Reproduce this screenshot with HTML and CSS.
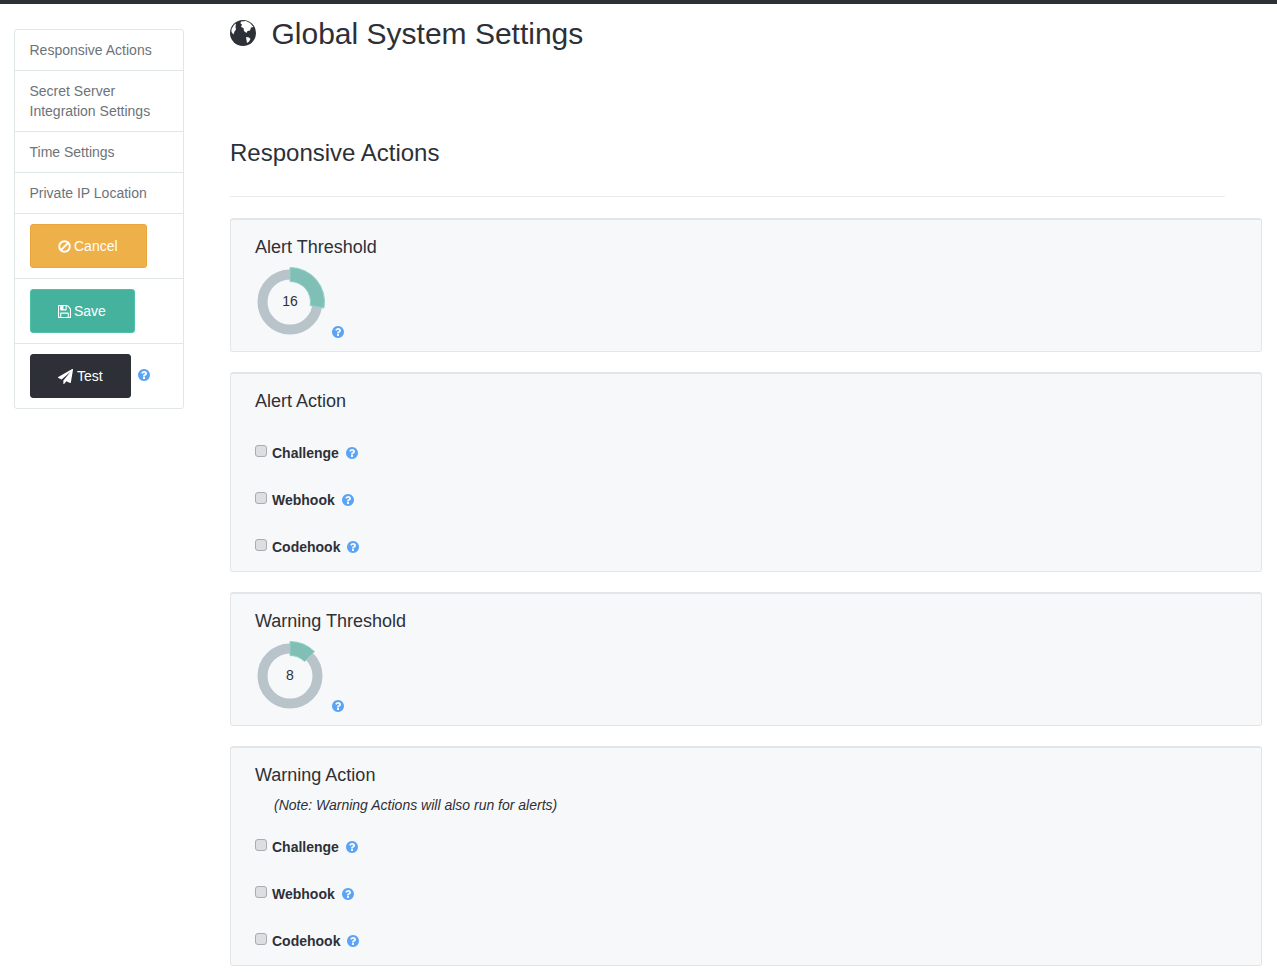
FILE: index.html
```html
<!DOCTYPE html>
<html>
    <head>
        <meta charset="UTF-8" />
        <title>Global System Settings</title>
        <link rel="stylesheet" href="styles.css">
    </head>
    <body>
        <svg class="sprites" width="0" height="0">
            <symbol id="help" viewBox="128 128 1536 1536">
                <path d="M1024 1376v-192q0-14-9-23t-23-9h-192q-14 0-23 9t-9 23v192q0 14 9 23t23 9h192q14 0 23-9t9-23zm256-672q0-88-55.5-163t-138.5-116-170-41q-243 0-371 213-15 24 8 42l132 100q7 6 19 6 16 0 25-12 53-68 86-92 34-24 86-24 48 0 85.5 26t37.5 59q0 38-20 61t-68 45q-63 28-115.5 86.5t-52.5 125.5v36q0 14 9 23t23 9h192q14 0 23-9t9-23q0-19 21.5-49.5t54.5-49.5q32-18 49-28.5t46-35 44.5-48 28-60.5 12.5-81zm384 192q0 209-103 385.5t-279.5 279.5-385.5 103-385.5-103-279.5-279.5-103-385.5 103-385.5 279.5-279.5 385.5-103 385.5 103 279.5 279.5 103 385.5z"/>
            </symbol>
        </svg>
        <div class="topbar"></div>
        <div class="layout">
            <div class="sidebar">
                <a class="side-item">Responsive Actions</a>
                <a class="side-item">Secret Server Integration Settings</a>
                <a class="side-item">Time Settings</a>
                <a class="side-item">Private IP Location</a>
                <div class="side-btn">
                    <button class="btn btn-cancel">
                        <svg class="btn-icon" viewBox="0 0 14 14"><circle cx="7" cy="7" r="5.700" fill="none" stroke="currentColor" stroke-width="2"/><path d="M3 11l8-8" stroke="currentColor" stroke-width="2"/></svg>
                        Cancel
                    </button>
                </div>
                <div class="side-btn">
                    <button class="btn btn-save">
                        <svg class="btn-icon" viewBox="128 128 1536 1536" fill="currentColor"><path d="M512 1536h768v-384h-768v384zm896 0h128v-896q0-14-10-38.5t-20-34.5l-281-281q-10-10-34-20t-39-10v416q0 40-28 68t-68 28h-576q-40 0-68-28t-28-68v-416h-128v1280h128v-416q0-40 28-68t68-28h832q40 0 68 28t28 68v416zm-384-928v-320q0-13-9.5-22.5t-22.5-9.5h-192q-13 0-22.5 9.5t-9.5 22.5v320q0 13 9.5 22.5t22.5 9.5h192q13 0 22.5-9.5t9.5-22.5zm640 32v928q0 40-28 68t-68 28h-1344q-40 0-68-28t-28-68v-1344q0-40 28-68t68-28h928q40 0 88 20t76 48l280 280q28 28 48 76t20 88z"/></svg>
                        Save
                    </button>
                </div>
                <div class="side-btn">
                    <button class="btn btn-test">
                        <svg class="btn-icon" viewBox="0 0 1792 1792" fill="currentColor"><path d="M1764 11q33 24 27 64l-256 1536q-5 29-32 45-14 8-31 8-11 0-24-5l-453-185-242 295q-18 23-49 23-13 0-22-4-19-7-30.5-23.5t-11.5-36.5v-349l864-1059-1069 925-395-162q-37-14-40-55-2-40 32-59l1664-960q15-9 32-9 20 0 36 11z"/></svg>
                        Test
                    </button>
                    <svg class="help help-test"><use href="#help"/></svg>
                </div>
            </div>

            <div class="main">
                <h1 class="page-title">
                    <svg class="globe" viewBox="0 0 26 26">
                        <circle cx="13" cy="13" r="13" fill="#2e3038"/>
                        <path d="M11 1.500l5-.5 4 2 3.500 4-2.500 .5-1 3-2.500 .5-1 2-2.500-2-.5-3-2.500-1 1-2.500-1.500-1z" fill="#fff"/>
                        <path d="M1.500 9l2.500-4 2-1.500-.5 3.500 .5 2.500-1.500 2-1 3-2-2.500z" fill="#fff"/>
                        <path d="M16 17l3 .5 1.500 1.500-1.500 2.500-2 1.500-.5-3z" fill="#fff"/>
                    </svg>
                    Global System Settings
                </h1>
                <h2 class="section-title">Responsive Actions</h2>
                <hr class="rule">

                <div class="panel">
                    <h3 class="panel-title">Alert Threshold</h3>
                    <div class="gauge-row">
                        <svg class="gauge" viewBox="0 0 70 70">
                            <circle cx="35" cy="35" r="27.500" fill="none" stroke="#b8c4ca" stroke-width="10"/>
                            <path d="M35 .5A34.500 34.500 0 0 1 68.980 41L55.190 38.570A20.500 20.500 0 0 0 35 14.500Z" fill="#7fbfb6" stroke="#93d3c6"/>
                            <text x="35" y="39" text-anchor="middle" class="gauge-num">16</text>
                        </svg>
                        <svg class="help"><use href="#help"/></svg>
                    </div>
                </div>

                <div class="panel panel-checks">
                    <h3 class="panel-title">Alert Action</h3>
                    <div class="checks">
                        <label class="check"><input type="checkbox"><b>Challenge</b><svg class="help"><use href="#help"/></svg></label>
                        <label class="check"><input type="checkbox"><b>Webhook</b><svg class="help"><use href="#help"/></svg></label>
                        <label class="check"><input type="checkbox"><b>Codehook</b><svg class="help"><use href="#help"/></svg></label>
                    </div>
                </div>

                <div class="panel">
                    <h3 class="panel-title">Warning Threshold</h3>
                    <div class="gauge-row">
                        <svg class="gauge" viewBox="0 0 70 70">
                            <circle cx="35" cy="35" r="27.500" fill="none" stroke="#b8c4ca" stroke-width="10"/>
                            <path d="M35 .5A34.500 34.500 0 0 1 59.400 10.600L49.500 20.500A20.500 20.500 0 0 0 35 14.500Z" fill="#7fbfb6" stroke="#93d3c6"/>
                            <text x="35" y="39" text-anchor="middle" class="gauge-num">8</text>
                        </svg>
                        <svg class="help"><use href="#help"/></svg>
                    </div>
                </div>

                <div class="panel panel-checks">
                    <h3 class="panel-title">Warning Action</h3>
                    <p class="note">(Note: Warning Actions will also run for alerts)</p>
                    <div class="checks">
                        <label class="check"><input type="checkbox"><b>Challenge</b><svg class="help"><use href="#help"/></svg></label>
                        <label class="check"><input type="checkbox"><b>Webhook</b><svg class="help"><use href="#help"/></svg></label>
                        <label class="check"><input type="checkbox"><b>Codehook</b><svg class="help"><use href="#help"/></svg></label>
                    </div>
                </div>
            </div>
        </div>
    </body>
</html>
```

FILE: styles.css
```css
body{
    margin: 0;
    font-family: "Liberation Sans", Arial, sans-serif;
    font-size: 14px;
    line-height: 20px;
    color: #2e3038;
    background-color: white;
}
.sprites{
    display: block;
    height: 0;
}
.topbar{
    height: 4px;
    background-color: #2e3038;
}
.layout{
    display: flex;
    align-items: flex-start;
}

/* left menu */
.sidebar{
    width: 168px;
    margin-top: 25px;
    margin-left: 14px;
    border: 1px solid #e1e6e8;
    border-radius: 3px;
    flex-shrink: 0;
}
.side-item{
    display: block;
    padding: 10px 15px 10px 14.5px;
    color: #6c737b;
    border-bottom: 1px solid #e1e6e8;
}
.side-btn{
    display: flex;
    align-items: center;
    padding: 10px 15px;
    border-bottom: 1px solid #e1e6e8;
}
.side-btn:last-child{
    border-bottom: none;
}
.btn{
    display: flex;
    align-items: center;
    height: 44px;
    padding: 0 28px 0 27px;
    font-family: inherit;
    font-size: 14px;
    color: white;
    border: 1px solid transparent;
    border-radius: 3px;
}
.btn-icon{
    width: 13px;
    height: 13px;
    margin-right: 3px;
}
.btn-cancel{
    background-color: #eeb049;
    border-color: #eaa63a;
}
.btn-save{
    background-color: #45b29d;
    border-color: #4dc0a9;
}
.btn-test{
    padding-right: 27px;
    background-color: #2e3038;
    border-color: #2e3038;
}
.btn-test .btn-icon{
    width: 15px;
    height: 15px;
    margin-right: 4px;
}

/* content */
.main{
    width: 1032px;
    margin-left: 46px;
    flex-shrink: 0;
}
.page-title{
    display: flex;
    align-items: center;
    margin: 12px 0 0;
    font-size: 30px;
    line-height: 36px;
    font-weight: normal;
}
.globe{
    width: 26px;
    height: 26px;
    margin-top: -2px;
    margin-right: 15.5px;
}
.section-title{
    margin: 86px 0 0;
    font-size: 24px;
    line-height: 30px;
    font-weight: normal;
}
.rule{
    width: 995px;
    height: 1px;
    margin: 28px 0 21px;
    border: none;
    background-color: #e9ecee;
}
.panel{
    margin-bottom: 20px;
    padding: 17px 24px 14px;
    background-color: #f7f8fa;
    border: 1px solid #e3e6e9;
    border-top-width: 2px;
    border-radius: 3px;
}
.panel-checks{
    padding-bottom: 1px;
}
.panel-title{
    margin: 0;
    font-size: 18px;
    line-height: 20px;
    font-weight: normal;
}
.gauge-row{
    display: flex;
    align-items: flex-end;
    margin-top: 10px;
}
.gauge{
    width: 70px;
    height: 70px;
}
.gauge-num{
    font-size: 14px;
    fill: #2e3038;
}
.help{
    width: 12px;
    height: 12px;
    fill: #5ba4f5;
}
.gauge-row .help{
    margin-left: 7px;
    margin-bottom: -1px;
}
.help-test{
    margin-left: 7px;
    margin-top: -2px;
}
.note{
    margin: 10px 0 8px 19px;
    font-style: italic;
}
.panel-checks .panel-title + .checks{
    margin-top: 18px;
}
.check{
    display: flex;
    align-items: center;
    height: 47px;
}
.check input{
    appearance: none;
    width: 12px;
    height: 12px;
    margin: -4px 5px 0 0;
    background-color: #dddee0;
    border: 1px solid #a9acb0;
    border-radius: 3px;
}
.check b{
    margin-right: 7px;
}
```
